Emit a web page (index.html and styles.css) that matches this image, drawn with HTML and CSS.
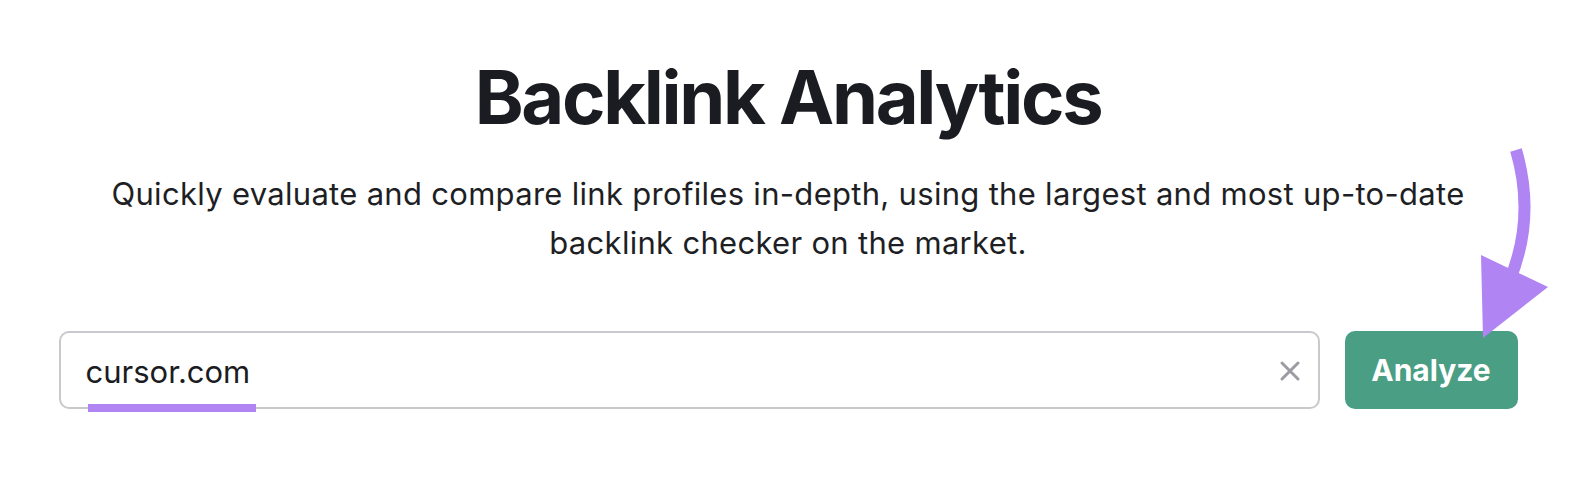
FILE: index.html
```html
<!DOCTYPE html>
<html lang="en">
<head>
<meta charset="utf-8">
<title>Backlink Analytics</title>
<link rel="stylesheet" href="styles.css">
</head>
<body>
<main class="page">
  <h1 class="title">Backlink Analytics</h1>
  <p class="subtitle">Quickly evaluate and compare link profiles in-depth, using the largest and most up-to-date<br>backlink checker on the market.</p>
  <div class="search">
    <div class="field">
      <span class="value">cursor.com</span>
      <span class="mark"></span>
      <svg class="clear" width="22" height="22" viewBox="0 0 22 22" aria-hidden="true">
        <path d="M3 3 L19 19 M19 3 L3 19" stroke="#9b9ba3" stroke-width="3" stroke-linecap="round" fill="none"/>
      </svg>
    </div>
    <button class="analyze" type="button">Analyze</button>
  </div>
  <svg class="arrow" width="1572" height="502" viewBox="0 0 1572 502" aria-hidden="true">
    <path d="M1516 150 Q1536 218 1509 282" stroke="#b084f3" stroke-width="12" fill="none"/>
    <polygon points="1481,255 1548,287 1483,338" fill="#b084f3"/>
  </svg>
</main>
</body>
</html>
```
FILE: styles.css
```css
html, body {
  margin: 0;
  padding: 0;
  background: #ffffff;
}
.page {
  position: relative;
  width: 1572px;
  height: 502px;
  overflow: hidden;
  display: flex;
  flex-direction: column;
  align-items: center;
  padding: 60px 0 0 4px;
  box-sizing: border-box;
  font-family: Inter, "Noto Sans", sans-serif;
  color: #1b1c22;
}
.title {
  margin: 0;
  font-size: 74px;
  line-height: 74px;
  font-weight: 700;
  letter-spacing: -2.3px;
}
.subtitle {
  margin: 35px 0 0;
  font-size: 31px;
  line-height: 49px;
  font-weight: 400;
  letter-spacing: 0.3px;
  text-align: center;
  color: #1e1f25;
}
.search {
  margin-top: 64px;
  display: flex;
  gap: 25px;
}
.field {
  position: relative;
  flex: 0 0 auto;
  width: 1261px;
  height: 78px;
  box-sizing: border-box;
  border: 2px solid #c9c9cd;
  border-radius: 10px;
  display: flex;
  align-items: center;
  padding: 2px 26px 0 25px;
}
.value {
  font-size: 31px;
  color: #1b1c22;
}
.mark {
  position: absolute;
  left: 27px;
  top: 71px;
  width: 168px;
  height: 8px;
  background: #b084f3;
}
.clear {
  margin-left: auto;
  margin-right: -9px;
}
.analyze {
  flex: 0 0 auto;
  width: 173px;
  height: 78px;
  border: none;
  border-radius: 10px;
  background: #4a9e84;
  color: #ffffff;
  font-family: Inter, "Noto Sans", sans-serif;
  font-size: 30px;
  font-weight: 700;
  padding: 0;
}
.arrow {
  position: absolute;
  left: 0;
  top: 0;
  pointer-events: none;
}
```
